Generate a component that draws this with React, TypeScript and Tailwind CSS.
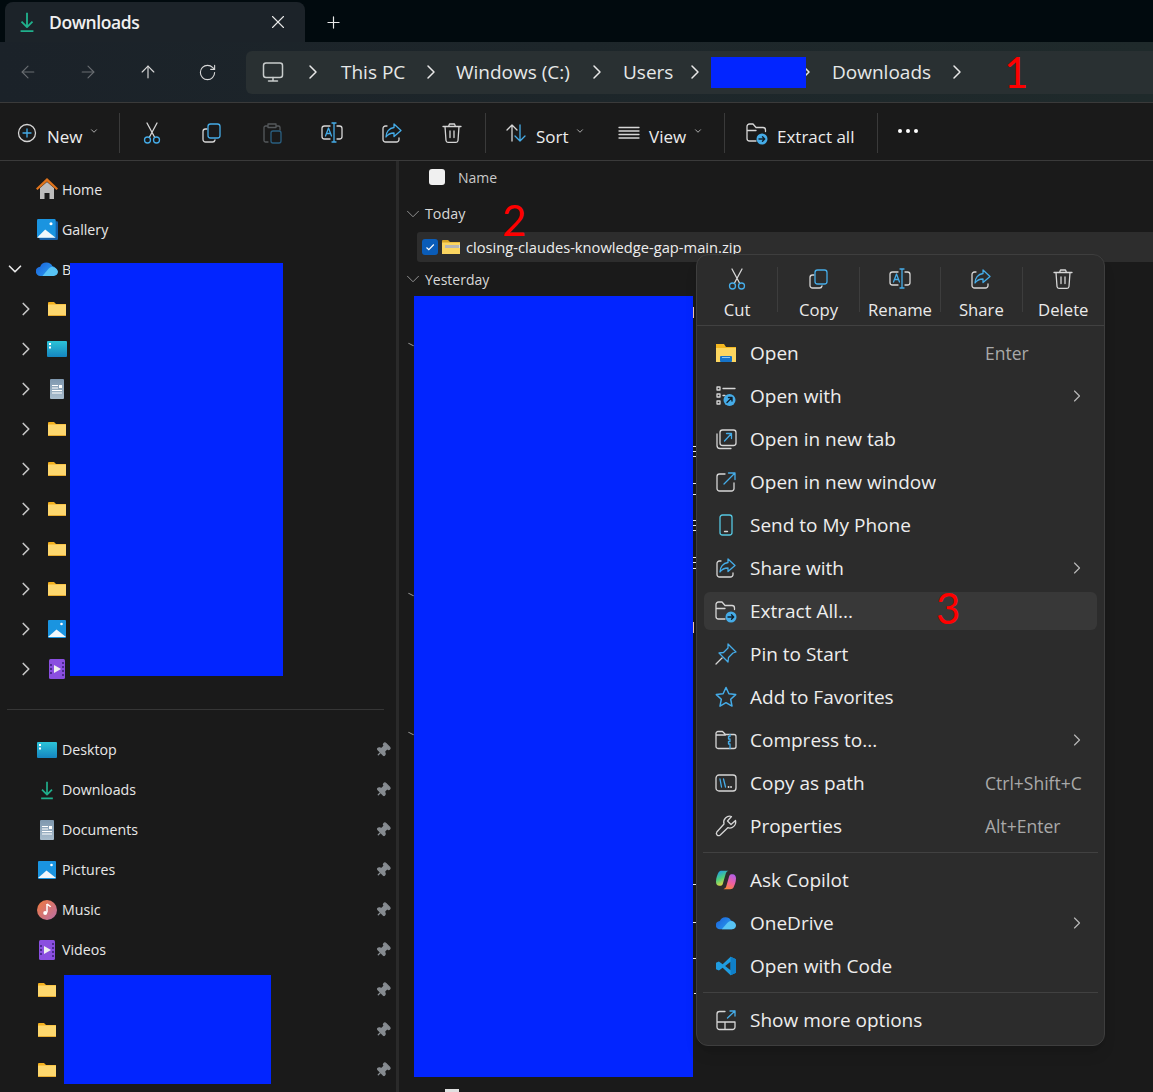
import type { ReactNode } from "react";
import { ArrowLeft, ArrowRight, ArrowUp, ChevronDown, ChevronRight, Pin, Plus, RotateCw, X } from "lucide-react";

const W = "#d6d6d6";
const B = "#45ace8";

function Ico({ children, size = 24 }: { children: ReactNode; size?: number }) {
  return (
    <svg width={size} height={size} viewBox="0 0 24 24" fill="none" strokeWidth={1.3} strokeLinecap="round" strokeLinejoin="round" className="shrink-0">
      {children}
    </svg>
  );
}

function CutIcon() {
  return (
    <Ico>
      <path d="M7 2l7.500 14M17 2L9.500 16" stroke={W} />
      <circle cx="7.500" cy="19" r="3" stroke={B} />
      <circle cx="16.500" cy="19" r="3" stroke={B} />
    </Ico>
  );
}
function CopyIcon() {
  return (
    <Ico>
      <path d="M7 8H5.500A2.500 2.500 0 0 0 3 10.500v8A2.500 2.500 0 0 0 5.500 21h7a2.500 2.500 0 0 0 2.500-2" stroke={W} />
      <rect x="8" y="3" width="12" height="14" rx="2.500" stroke={B} />
    </Ico>
  );
}
function PasteIcon() {
  return (
    <Ico>
      <path d="M7 5H5.500A1.500 1.500 0 0 0 4 6.500v13A1.500 1.500 0 0 0 5.500 21H8M17 5h1.500A1.500 1.500 0 0 1 20 6.500V9M8 3h8v3.500H8z" stroke="#55595c" />
      <rect x="11" y="10" width="10" height="12" rx="2" stroke="#2a5f80" />
    </Ico>
  );
}
function RenameIcon() {
  return (
    <Ico>
      <path d="M10 5H4.500A2.500 2.500 0 0 0 2 7.500v8A2.500 2.500 0 0 0 4.500 18H10M17 5h2.500A2.500 2.500 0 0 1 22 7.500v8a2.500 2.500 0 0 1-2.500 2.500H17" stroke={W} />
      <path d="M5.500 15l3-8 3 8M6.700 12.500h3.600M14 2v19M12 2h4M12 21h4" stroke={B} />
    </Ico>
  );
}
function ShareIcon() {
  return (
    <Ico>
      <path d="M7 5H5.500A2.500 2.500 0 0 0 3 7.500v11A2.500 2.500 0 0 0 5.500 21h11a2.500 2.500 0 0 0 2.500-2.500V17" stroke={W} />
      <path d="M14 3l7 6.500-7 6v-3.500c-3.500 0-6 1-8 4 0-5 3-9 8-9.500z" stroke={B} />
    </Ico>
  );
}
function TrashIcon() {
  return (
    <Ico>
      <path d="M3 5.500h18M8.500 5.500L9.500 3h5l1 2.500M5 5.500l1 14a2 2 0 0 0 2 1.800h8a2 2 0 0 0 2-1.800l1-14M10 10v6.500M14 10v6.500" stroke={W} />
    </Ico>
  );
}
function ExtractIcon() {
  return (
    <Ico>
      <path d="M11 20H4.500A2.500 2.500 0 0 1 2 17.500v-12A2.500 2.500 0 0 1 4.500 3H8l3 3.500h7a2.500 2.500 0 0 1 2.500 2.500v1.500M2 9.500h9" stroke={W} />
      <circle cx="17" cy="18" r="5.500" fill={B} />
      <path d="M14 18h5.500M17.500 15.800l2.200 2.200-2.200 2.200" stroke="#10202c" strokeWidth={1.4} />
    </Ico>
  );
}
function MonitorIcon() {
  return (
    <Ico>
      <rect x="2.500" y="3" width="19" height="14.500" rx="2.500" stroke="#c8cccc" strokeWidth={1.5} />
      <path d="M12 17.500V21M7.500 21h9" stroke="#c8cccc" strokeWidth={1.5} />
    </Ico>
  );
}
function NewIcon() {
  return (
    <Ico>
      <circle cx="12" cy="12" r="8.500" stroke={W} />
      <path d="M12 8v8M8 12h8" stroke={B} />
    </Ico>
  );
}
function SortIcon() {
  return (
    <Ico>
      <path d="M8 20V4M3 9l5-5 5 5" stroke={W} />
      <path d="M16 4v16M11 15l5 5 5-5" stroke={B} />
    </Ico>
  );
}
function ViewIcon() {
  return (
    <Ico>
      <path d="M2 6.500h20M2 10h20M2 13.500h20M2 17h20" stroke={W} />
    </Ico>
  );
}
function DownloadIcon({ size = 24 }: { size?: number }) {
  return (
    <Ico size={size}>
      <path d="M12 2v15M6 11.500l6 6 6-6M5 22h14" stroke="#20b08c" strokeWidth={2} strokeLinecap="butt" />
    </Ico>
  );
}
function OpenFolderIcon() {
  return (
    <svg width="20" height="18" viewBox="0 0 20 18" className="shrink-0">
      <path d="M0 0h8l2 3h10v15H0z" fill="#f5b820" />
      <rect x="0" y="4" width="20" height="14" fill="#fcd660" />
      <rect x="4" y="12" width="12" height="6" rx="1" fill="#1573c9" />
      <rect x="6" y="13" width="8" height="1" fill="#8fc8f0" />
    </svg>
  );
}
function OpenWithIcon() {
  return (
    <Ico>
      <path d="M3 3h3v3H3zM3 10h3v3H3zM3 17h3v3H3zM9 4.500h12M9 11.500h2" stroke={W} />
      <circle cx="15.500" cy="16" r="6" fill={B} />
      <path d="M13 18.500l5-5M14.500 13.500H18V17" stroke="#10202c" strokeWidth={1.4} />
    </Ico>
  );
}
function NewTabIcon() {
  return (
    <Ico>
      <path d="M3 7v11.500A3 3 0 0 0 6 21.500h11" stroke={W} />
      <rect x="6" y="3" width="16" height="15.500" rx="2.500" stroke={W} />
      <path d="M10.500 14l6.500-7M12.500 6.500H17.500V11.500" stroke={B} />
    </Ico>
  );
}
function NewWindowIcon() {
  return (
    <Ico>
      <path d="M11 4H5.500A2.500 2.500 0 0 0 3 6.500v12A2.500 2.500 0 0 0 5.500 21h12a2.500 2.500 0 0 0 2.500-2.500V13" stroke={W} />
      <path d="M10 14L21 3M14.500 3H21v6.500" stroke={B} />
    </Ico>
  );
}
function PhoneIcon() {
  return (
    <Ico>
      <rect x="6" y="2" width="12" height="20" rx="2.500" stroke="#55c6e0" />
      <path d="M10.500 18.500h3" stroke={W} />
    </Ico>
  );
}
function PinStartIcon() {
  return (
    <Ico>
      <path d="M14 2l8 8-3 1-4.500 4.500-.5 4.500-9-9 4.500-.5L14 6z" stroke={B} />
      <path d="M8 16l-6 6" stroke={W} />
    </Ico>
  );
}
function StarIcon() {
  return (
    <Ico>
      <path d="M12 2.500l2.900 6.300 6.800.8-5 4.700 1.300 6.800-6-3.400-6 3.400 1.300-6.800-5-4.700 6.800-.8z" stroke={B} strokeWidth={1.5} />
    </Ico>
  );
}
function CompressIcon() {
  return (
    <Ico>
      <path d="M2 7V5.500A2 2 0 0 1 4 3.500h4.500l3 3H20a2 2 0 0 1 2 2v10a2 2 0 0 1-2 2H4a2 2 0 0 1-2-2V7h9.500" stroke={W} />
      <path d="M16 6.500v2h-1.500v2.500H16v2.500h-1.500V16H16v4.500" stroke={B} />
    </Ico>
  );
}
function PathIcon() {
  return (
    <Ico>
      <rect x="2" y="4" width="20" height="16" rx="3" stroke={W} />
      <path d="M6 8l1.500 8M9.500 8l2 8" stroke={B} />
      <path d="M14.500 16h.1M17 16h.1" stroke={W} strokeWidth={1.800} />
    </Ico>
  );
}
function WrenchIcon() {
  return (
    <Ico>
      <path d="M21.500 6.500l-4.500 4-3.500-3.500 4-4.500a6 6 0 0 0-7.500 7.500L2.800 18a2.300 2.300 0 0 0 3.200 3.200l7.800-7.500a6 6 0 0 0 7.700-7.200z" stroke={W} />
    </Ico>
  );
}
function CopilotIcon() {
  return (
    <svg width="20" height="20" viewBox="0 0 24 24" className="shrink-0">
      <defs>
        <linearGradient id="cpa" x1="0.200" y1="0" x2="0.600" y2="1">
          <stop offset="0" stopColor="#1e9be8" />
          <stop offset="0.5" stopColor="#4fd07a" />
          <stop offset="1" stopColor="#f7d83a" />
        </linearGradient>
        <linearGradient id="cpb" x1="0.700" y1="0" x2="0.300" y2="1">
          <stop offset="0" stopColor="#b45fe8" />
          <stop offset="0.55" stopColor="#f0609c" />
          <stop offset="1" stopColor="#f8873a" />
        </linearGradient>
      </defs>
      <path d="M7 1h8c-2 .5-3 2-3.500 4L8 17c-.5 1.500-2 2-3 2H4c-2.500 0-4-2-4-5 0-5 2-9 3-11 .8-1.400 2-2 4-2z" fill="url(#cpa)" />
      <path d="M17 23H9c2-.5 3-2 3.500-4L16 7c.5-1.500 2-2 3-2h1c2.500 0 4 2 4 5 0 5-2 9-3 11-.8 1.400-2 2-4 2z" fill="url(#cpb)" />
    </svg>
  );
}
function CloudIcon({ size = 22 }: { size?: number }) {
  return (
    <svg width={size} height={size} viewBox="0 0 24 24" className="shrink-0">
      <defs>
        <linearGradient id="odr" x1="0" y1="0" x2="1" y2="0.600">
          <stop offset="0" stopColor="#1a5fd8" />
          <stop offset="1" stopColor="#2a9cf0" />
        </linearGradient>
      </defs>
      <path d="M5 19.500a5 5 0 0 1-.5-10A7.500 7.500 0 0 1 18 9a5.500 5.500 0 0 1 1 10.500z" fill="url(#odr)" />
      <path d="M7 19.500l6-7c2-2 4-3.500 6-2.500 3 .5 5 3 5 5 0 2.500-2 4.500-5 4.500z" fill="#58c4f5" />
    </svg>
  );
}
function VsCodeIcon() {
  return (
    <svg width="20" height="20" viewBox="0 0 24 24" className="shrink-0">
      <path d="M17.500 1L24 4v16l-6.500 3-9.500-9-4.500 3.500L0 16V8l3.500-1.500L8 10z" fill="#1f9ce0" />
      <path d="M17.500 7v10l-6.500-5z" fill="#2c2c2c" />
      <path d="M17.500 1L24 4v16l-6.500 3z" fill="#0f7fc8" />
    </svg>
  );
}
function MoreOptionsIcon() {
  return (
    <Ico>
      <path d="M11 3.500H5.500A2.500 2.500 0 0 0 3 6v13A2.500 2.500 0 0 0 5.500 21.500h13A2.500 2.500 0 0 0 21 19v-5H3M11 14v7.500" stroke={W} />
      <path d="M13.500 10L21 3M16 3h5v5" stroke={B} />
    </Ico>
  );
}

function Folder() {
  return (
    <svg width="18" height="14" viewBox="0 0 18 14" className="shrink-0">
      <path d="M0 1a1 1 0 0 1 1-1h5l2 2h10v4H0z" fill="#f4b01c" />
      <rect x="0" y="2.500" width="18" height="11.500" rx="0.500" fill="#fdd76e" />
      <rect x="0" y="13" width="18" height="1" fill="#e8ac30" />
    </svg>
  );
}
function HomeIcon() {
  return (
    <svg width="22" height="22" viewBox="0 0 22 22" className="shrink-0">
      <path d="M4 10l7-6 7 6v11h-4.500v-6h-5v6H4z" fill="#bdbdbd" />
      <path d="M0 10.500L11 0l11 10.500-1.500 1.500L11 3.500 1.500 12z" fill="#e0741c" />
    </svg>
  );
}
function PictureIcon({ stack = false }: { stack?: boolean }) {
  return (
    <svg width={stack ? 21 : 18} height={stack ? 21 : 18} viewBox="0 0 18 18" className="shrink-0">
      {stack && <rect x="2" y="2" width="16" height="16" rx="1" fill="#175fa8" />}
      <rect x="0" y="0" width={stack ? 16 : 18} height={stack ? 16 : 18} rx="1" fill="#1a94e0" />
      <circle cx={stack ? 12 : 13.500} cy="4" r="1.300" fill="#fff" />
      <path d={stack ? "M0 16l7-7 9 7z" : "M0 17l8.500-7.500L18 17z"} fill="#f2f7fb" />
    </svg>
  );
}
function DesktopIcon({ size = 20 }: { size?: number }) {
  return (
    <svg width={size} height={size * 0.8} viewBox="0 0 20 16" className="shrink-0">
      <defs>
        <linearGradient id="dsk" x1="0" y1="0" x2="0" y2="1">
          <stop offset="0" stopColor="#2cc4d8" />
          <stop offset="1" stopColor="#1585c0" />
        </linearGradient>
      </defs>
      <rect width="20" height="16" rx="1" fill="url(#dsk)" />
      <rect x="2" y="2" width="2" height="2" fill="#fff" />
      <rect x="2" y="5.500" width="2" height="2" fill="#fff" />
    </svg>
  );
}
function DocIcon() {
  return (
    <svg width="14" height="20" viewBox="0 0 14 20" className="shrink-0">
      <defs>
        <linearGradient id="doc" x1="0" y1="0" x2="0" y2="1">
          <stop offset="0" stopColor="#7e97ae" />
          <stop offset="1" stopColor="#a9bdcd" />
        </linearGradient>
      </defs>
      <rect width="14" height="20" rx="1" fill="url(#doc)" />
      <path d="M2 6h6v1H2zM2 8.500h6v1H2zM2 11h10v1H2zM2 13.500h10v1H2z" fill="#fff" />
      <rect x="9" y="6" width="3" height="3" fill="#fff" />
    </svg>
  );
}
function MusicIcon() {
  return (
    <svg width="20" height="20" viewBox="0 0 20 20" className="shrink-0">
      <defs>
        <linearGradient id="msc" x1="0" y1="0" x2="1" y2="1">
          <stop offset="0" stopColor="#f07a3c" />
          <stop offset="1" stopColor="#b96ea8" />
        </linearGradient>
      </defs>
      <circle cx="10" cy="10" r="10" fill="url(#msc)" />
      <path d="M10 4v8.500" stroke="#fff" strokeWidth="1.500" />
      <path d="M10 4c1 1.500 3 1.500 3.500 3" stroke="#fff" strokeWidth="1.500" fill="none" />
      <circle cx="8.200" cy="13" r="2" fill="#fff" />
    </svg>
  );
}
function VideoIcon() {
  return (
    <svg width="16" height="20" viewBox="0 0 16 20" className="shrink-0">
      <rect width="16" height="20" rx="1.500" fill="#8a4ee0" />
      <path d="M5 6l7 4-7 4z" fill="#eee" />
      <path d="M1 5h2v2H1zM1 9h2v2H1zM1 13h2v2H1zM13 3h2v2h-2zM13 7h2v2h-2zM13 11h2v2h-2zM13 15h2v2h-2z" fill="#4c2a90" />
    </svg>
  );
}
function ZipFolderIcon() {
  return (
    <svg width="18" height="14" viewBox="0 0 18 14" className="shrink-0">
      <path d="M0 1a1 1 0 0 1 1-1h5l2 2h10v4H0z" fill="#d9a526" />
      <rect x="0" y="2.500" width="18" height="11.500" fill="#fbd560" />
      <rect x="3" y="5" width="15" height="3" fill="#d8d8d8" />
      <path d="M4 5v3M6 5v3M8 5v3M10 5v3M12 5v3M14 5v3M16 5v3" stroke="#777" strokeWidth="0.700" />
    </svg>
  );
}

function Divider() {
  return <div className="w-px h-10 bg-[#3a3a3a] shrink-0" />;
}

function Caret() {
  return <ChevronDown size={10} strokeWidth={2} className="text-[#c8c8c8] -mt-1" />;
}

function Crumb({ label, className }: { label: string; className: string }) {
  return (
    <>
      <ChevronRight size={24} strokeWidth={1.500} className="text-[#e8e8e8] shrink-0" />
      <span className={`text-[19px] text-[#e6e8e8] whitespace-nowrap ${className}`}>{label}</span>
    </>
  );
}

function SideRow({ icon, label, expand, pinned }: { icon: ReactNode; label?: string; expand?: "open" | "closed"; pinned?: boolean }) {
  return (
    <div className="h-10 flex items-center relative">
      {expand === "open" && <ChevronDown size={22} strokeWidth={1.800} className="text-[#e8e8e8] ml-[4px] shrink-0" />}
      {expand === "closed" && <ChevronRight size={22} strokeWidth={1.800} className="text-[#c8c8c8] ml-[15px] shrink-0" />}
      <div className={`flex justify-center shrink-0 ${expand === "closed" ? "w-[22px] ml-[9px]" : expand === "open" ? "w-[22px] ml-[10px]" : "w-[22px] ml-[36px]"}`}>{icon}</div>
      {label && <span className={`ml-[4px] text-[14.200px] text-[#e8e8e8] ${pinned ? "" : "mt-px"}`}>{label}</span>}
      {pinned && <Pin size={16} strokeWidth={2} className="ml-auto mr-[5px] rotate-45 fill-[#868b90] text-[#868b90]" />}
    </div>
  );
}

function MenuAction({ icon, label }: { icon: ReactNode; label: string }) {
  return (
    <div className="flex flex-col items-center h-[45px] mt-[12px] border-r border-[#3d3d3d] last:border-r-0">
      {icon}
      <span className="mt-[8px] text-[16.700px] leading-[22px] text-[#eaeaea]">{label}</span>
    </div>
  );
}

function MenuItem({ icon, label, shortcut, sub, active }: { icon: ReactNode; label: string; shortcut?: string; sub?: boolean; active?: boolean }) {
  return (
    <div className="h-[43px] mx-[7px] flex items-center">
      <div className={`flex items-center grow px-[12px] ${active ? "h-[38px] rounded-md bg-[#383838]" : "h-full"}`}>
        <div className="w-5 flex justify-center shrink-0">{icon}</div>
        <span className="ml-[14px] mt-px w-[235px] shrink-0 text-[19px] text-[#eeeeee] whitespace-nowrap">{label}</span>
        {shortcut && <span className="mt-px text-[17.500px] text-[#a9a9a9] whitespace-nowrap">{shortcut}</span>}
        {sub && <ChevronRight size={20} strokeWidth={1.400} className="ml-auto -mr-[2px] text-[#b9b9b9]" />}
      </div>
    </div>
  );
}

function MenuSep() {
  return <div className="h-px mx-[6px] bg-[#414141] my-[5px]" />;
}

// stray bits of file names sticking out from under the redaction
const ticks = [
  [693, 307, 1, 11, "#f0c4b8"],
  [693, 446, 3, 1, "#eee"],
  [693, 451, 3, 1, "#eee"],
  [693, 456, 3, 1, "#eee"],
  [693, 483, 3, 1, "#eee"],
  [693, 494, 3, 1, "#eee"],
  [693, 520, 3, 1, "#eee"],
  [693, 525, 3, 1, "#eee"],
  [693, 530, 3, 1, "#eee"],
  [693, 557, 3, 1, "#eee"],
  [693, 562, 3, 1, "#eee"],
  [693, 568, 3, 1, "#eee"],
  [693, 622, 1, 11, "#f0c4b8"],
  [693, 884, 3, 1, "#eee"],
  [693, 922, 3, 1, "#eee"],
  [693, 958, 3, 1, "#eee"],
  [694, 993, 2, 1, "#eee"],
] as const;

export default function App() {
  return (
    <div className="relative w-[1153px] h-[1092px] overflow-hidden bg-[#1a1a1a] flex flex-col font-['Open_Sans','Noto_Sans',sans-serif]">
      {/* tabs */}
      <div className="h-[42px] shrink-0 bg-[#010a0e] flex items-end pl-[5px]">
        <div className="w-[300px] h-[40px] bg-[#1c2329] rounded-t-lg flex items-center pl-[11px] pr-[16px]">
          <DownloadIcon size={22} />
          <span className="ml-[11px] text-[17.500px] font-semibold tracking-[-0.4px] text-[#f0f0f0]">Downloads</span>
          <X size={22} strokeWidth={1.200} className="ml-auto text-[#e8e8e8]" />
        </div>
        <Plus size={19} strokeWidth={1.500} className="ml-[19px] mb-[10px] text-[#e8e8e8]" />
      </div>

      {/* address bar */}
      <div className="h-[61px] shrink-0 bg-gradient-to-r from-[#1b2229] to-[#1f2a2b] border-b border-[#3a3a3a] flex items-center">
        <div className="w-[246px] shrink-0 flex items-center pl-[18px] gap-[40px]">
          <ArrowLeft size={20} strokeWidth={1.300} className="text-[#6a6e72]" />
          <ArrowRight size={20} strokeWidth={1.300} className="text-[#6a6e72]" />
          <ArrowUp size={20} strokeWidth={1.400} className="text-[#d8d8d8]" />
          <RotateCw size={19} strokeWidth={1.400} className="text-[#d8d8d8]" />
        </div>
        <div className="grow h-[43px] bg-[#293032] rounded-l-md flex items-center pl-[15px]">
          <MonitorIcon />
          <div className="w-[16px] shrink-0" />
          <Crumb label="This PC" className="ml-[16px] w-[64px]" />
          <div className="w-[14px] shrink-0" />
          <Crumb label="Windows (C:)" className="ml-[13px] w-[115px]" />
          <div className="w-[14px] shrink-0" />
          <Crumb label="Users" className="ml-[14px] w-[48px]" />
          <div className="w-[12px] shrink-0" />
          <ChevronRight size={24} strokeWidth={1.500} className="text-[#e8e8e8] shrink-0" />
          <div className="w-[95px] h-[31px] ml-[4px] bg-[#0225ff] shrink-0 relative z-10" />
          <ChevronRight size={24} strokeWidth={1.500} className="text-[#e8e8e8] shrink-0 -ml-[12px]" />
          <span className="ml-[14px] text-[19px] text-[#e6e8e8] w-[98px] whitespace-nowrap">Downloads</span>
          <ChevronRight size={24} strokeWidth={1.500} className="ml-[15px] text-[#e8e8e8] shrink-0" />
        </div>
      </div>

      {/* command bar */}
      <div className="h-[58px] shrink-0 bg-[#1a1a1a] border-b border-[#3a3a3a] flex items-center pl-[15px] pt-[3px] text-[#ececec]">
        <NewIcon />
        <span className="ml-[8px] text-[17px] w-[36px] mt-[8px]">New</span>
        <span className="ml-[6px]"><Caret /></span>
        <div className="ml-[20px]"><Divider /></div>
        <div className="flex ml-[2px]">
          {[<CutIcon key="c" />, <CopyIcon key="o" />, <PasteIcon key="p" />, <RenameIcon key="r" />, <ShareIcon key="s" />, <TrashIcon key="t" />].map((ic) => (
            <div key={ic.key} className="w-[60px] flex justify-center">{ic}</div>
          ))}
        </div>
        <div className="ml-[3px]"><Divider /></div>
        <div className="ml-[18px]"><SortIcon /></div>
        <span className="ml-[8px] text-[17px] w-[32px] mt-[8px]">Sort</span>
        <span className="ml-[7px]"><Caret /></span>
        <div className="ml-[32px]"><ViewIcon /></div>
        <span className="ml-[8px] text-[17px] w-[38px] mt-[8px]">View</span>
        <span className="ml-[6px]"><Caret /></span>
        <div className="ml-[21px]"><Divider /></div>
        <div className="ml-[20px]"><ExtractIcon /></div>
        <span className="ml-[8px] text-[17px] w-[76px] whitespace-nowrap mt-[8px]">Extract all</span>
        <div className="ml-[24px]"><Divider /></div>
        <div className="ml-[20px] flex gap-[4px] -mt-[4px]">
          <span className="w-[4px] h-[4px] rounded-full bg-white" />
          <span className="w-[4px] h-[4px] rounded-full bg-white" />
          <span className="w-[4px] h-[4px] rounded-full bg-white" />
        </div>
      </div>

      {/* body */}
      <div className="grow flex min-h-0">
        <aside className="w-[396px] shrink-0 pt-[8px] overflow-hidden">
          <SideRow icon={<HomeIcon />} label="Home" />
          <SideRow icon={<PictureIcon stack />} label="Gallery" />
          <SideRow icon={<CloudIcon />} label="B" expand="open" />
          <SideRow icon={<Folder />} expand="closed" />
          <SideRow icon={<DesktopIcon />} expand="closed" />
          <SideRow icon={<DocIcon />} expand="closed" />
          <SideRow icon={<Folder />} expand="closed" />
          <SideRow icon={<Folder />} expand="closed" />
          <SideRow icon={<Folder />} expand="closed" />
          <SideRow icon={<Folder />} expand="closed" />
          <SideRow icon={<Folder />} expand="closed" />
          <SideRow icon={<PictureIcon />} expand="closed" />
          <SideRow icon={<VideoIcon />} expand="closed" />
          <div className="h-px ml-[7px] mr-[12px] my-[20px] bg-[#363636]" />
          <SideRow icon={<DesktopIcon size={20} />} label="Desktop" pinned />
          <SideRow icon={<DownloadIcon size={20} />} label="Downloads" pinned />
          <SideRow icon={<DocIcon />} label="Documents" pinned />
          <SideRow icon={<PictureIcon />} label="Pictures" pinned />
          <SideRow icon={<MusicIcon />} label="Music" pinned />
          <SideRow icon={<VideoIcon />} label="Videos" pinned />
          <SideRow icon={<Folder />} pinned />
          <SideRow icon={<Folder />} pinned />
          <SideRow icon={<Folder />} pinned />
        </aside>
        <div className="w-[3px] shrink-0 bg-[#2a2a2a]" />
        <main className="grow min-w-0 pl-[8px]">
          <div className="h-[32px] flex items-center pl-[22px]">
            <span className="w-4 h-4 rounded-[3px] bg-[#f0f0f0]" />
            <span className="ml-[13px] text-[14px] text-[#c9c9c9]">Name</span>
          </div>
          <div className="h-[39px] pt-[3px] flex items-center">
            <ChevronDown size={22} strokeWidth={1} className="-ml-[5px] text-[#9a9a9a]" />
            <span className="ml-[1px] text-[14.300px] text-[#d8d8d8]">Today</span>
          </div>
          <div className="h-[30px] ml-[10px] bg-[#2d2d2d] rounded-l-[3px] flex items-center pl-[5px]">
            <span className="w-4 h-4 rounded-[3px] bg-[#0a5cb8] flex items-center justify-center">
              <svg width="10" height="10" viewBox="0 0 10 10"><path d="M1.500 5.500l2.300 2.200 5-5.200" stroke="#fff" strokeWidth="1.200" fill="none" /></svg>
            </span>
            <span className="ml-[4px]"><ZipFolderIcon /></span>
            <span className="ml-[6px] text-[14.700px] text-[#ededed] whitespace-nowrap">closing-claudes-knowledge-gap-main.zip</span>
          </div>
          <div className="h-[34px] flex items-center">
            <ChevronDown size={22} strokeWidth={1} className="-ml-[5px] text-[#9a9a9a]" />
            <span className="ml-[1px] text-[14px] text-[#d8d8d8]">Yesterday</span>
          </div>
        </main>
      </div>

      {/* redactions */}
      <div className="absolute left-[70px] top-[263px] w-[213px] h-[413px] bg-[#0225ff]" />
      <div className="absolute left-[64px] top-[975px] w-[207px] h-[109px] bg-[#0225ff]" />
      <div className="absolute left-[414px] top-[296px] w-[279px] h-[781px] bg-[#0225ff]" />
      {ticks.map(([x, y, w, h, c]) => (
        <div key={y} className="absolute" style={{ left: x, top: y, width: w, height: h, background: c }} />
      ))}
      {[344, 594, 733].map((y) => (
        <div key={y} className="absolute left-[408px] w-[6px] h-px bg-[#9a9a9a] rotate-[28deg]" style={{ top: y }} />
      ))}
      <div className="absolute left-[445px] top-[1089px] w-[14px] h-[3px] bg-[#e0e0e0]" />

      {/* context menu */}
      <div className="absolute left-[696px] top-[254px] w-[409px] h-[792px] rounded-xl bg-[#2c2c2c] border border-[#3e3e3e] shadow-lg overflow-hidden">
        <div className="h-[71px] grid grid-cols-5 border-b border-[#414141]">
          <MenuAction icon={<CutIcon />} label="Cut" />
          <MenuAction icon={<CopyIcon />} label="Copy" />
          <MenuAction icon={<RenameIcon />} label="Rename" />
          <MenuAction icon={<ShareIcon />} label="Share" />
          <MenuAction icon={<TrashIcon />} label="Delete" />
        </div>
        <div className="pt-[5px]">
          <MenuItem icon={<OpenFolderIcon />} label="Open" shortcut="Enter" />
          <MenuItem icon={<OpenWithIcon />} label="Open with" sub />
          <MenuItem icon={<NewTabIcon />} label="Open in new tab" />
          <MenuItem icon={<NewWindowIcon />} label="Open in new window" />
          <MenuItem icon={<PhoneIcon />} label="Send to My Phone" />
          <MenuItem icon={<ShareIcon />} label="Share with" sub />
          <MenuItem icon={<ExtractIcon />} label="Extract All..." active />
          <MenuItem icon={<PinStartIcon />} label="Pin to Start" />
          <MenuItem icon={<StarIcon />} label="Add to Favorites" />
          <MenuItem icon={<CompressIcon />} label="Compress to..." sub />
          <MenuItem icon={<PathIcon />} label="Copy as path" shortcut="Ctrl+Shift+C" />
          <MenuItem icon={<WrenchIcon />} label="Properties" shortcut="Alt+Enter" />
          <MenuSep />
          <MenuItem icon={<CopilotIcon />} label="Ask Copilot" />
          <MenuItem icon={<CloudIcon size={20} />} label="OneDrive" sub />
          <MenuItem icon={<VsCodeIcon />} label="Open with Code" />
          <MenuSep />
          <MenuItem icon={<MoreOptionsIcon />} label="Show more options" />
        </div>
      </div>

      {/* annotations */}
      <span className="absolute left-[1004px] top-[47px] text-[42px] leading-[50px] text-[#f00] font-['Lato',sans-serif]">1</span>
      <span className="absolute left-[502px] top-[195px] text-[42px] leading-[50px] text-[#f00] font-['Lato',sans-serif]">2</span>
      <span className="absolute left-[936px] top-[583px] text-[42px] leading-[50px] text-[#f00] font-['Lato',sans-serif]">3</span>
    </div>
  );
}
